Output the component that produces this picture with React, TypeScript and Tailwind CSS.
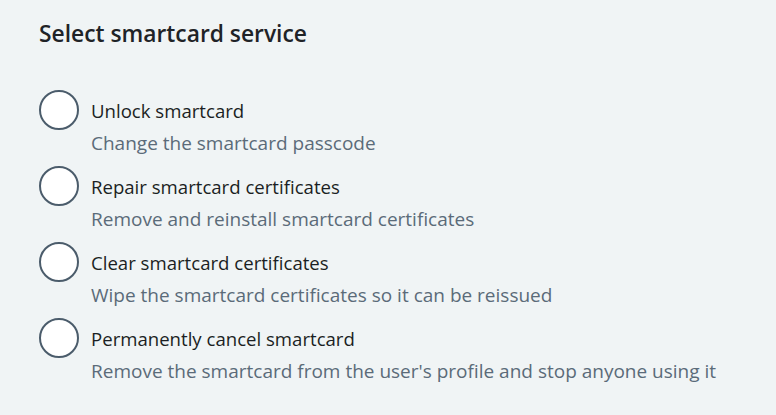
const options = [
  { label: "Unlock smartcard", desc: "Change the smartcard passcode" },
  { label: "Repair smartcard certificates", desc: "Remove and reinstall smartcard certificates" },
  { label: "Clear smartcard certificates", desc: "Wipe the smartcard certificates so it can be reissued" },
  { label: "Permanently cancel smartcard", desc: "Remove the smartcard from the user's profile and stop anyone using it" },
];

export default function App() {
  return (
    <div
      className="w-[776px] h-[415px] bg-[#f0f4f5] pl-[39px] pt-[20px]"
      style={{ fontFamily: '"Open Sans", "Noto Sans", sans-serif' }}
    >
      <h1 className="text-[22.8px] leading-[28px] font-semibold text-[#1f2327]">Select smartcard service</h1>
      <div className="mt-[42px] flex flex-col gap-[7px]">
        {options.map((o) => (
          <label key={o.label} className="flex items-start gap-[12px] cursor-pointer">
            <input type="radio" name="service" className="sr-only" />
            <span className="w-[40px] h-[40px] rounded-full border-2 border-[#4b5c6b] bg-white shrink-0" />
            <span className="flex flex-col pt-[5px]">
              <span className="text-[18.6px] leading-[32px] text-[#1b1f23]">{o.label}</span>
              <span className="text-[19px] leading-[32px] text-[#5b6b79]">{o.desc}</span>
            </span>
          </label>
        ))}
      </div>
    </div>
  );
}
